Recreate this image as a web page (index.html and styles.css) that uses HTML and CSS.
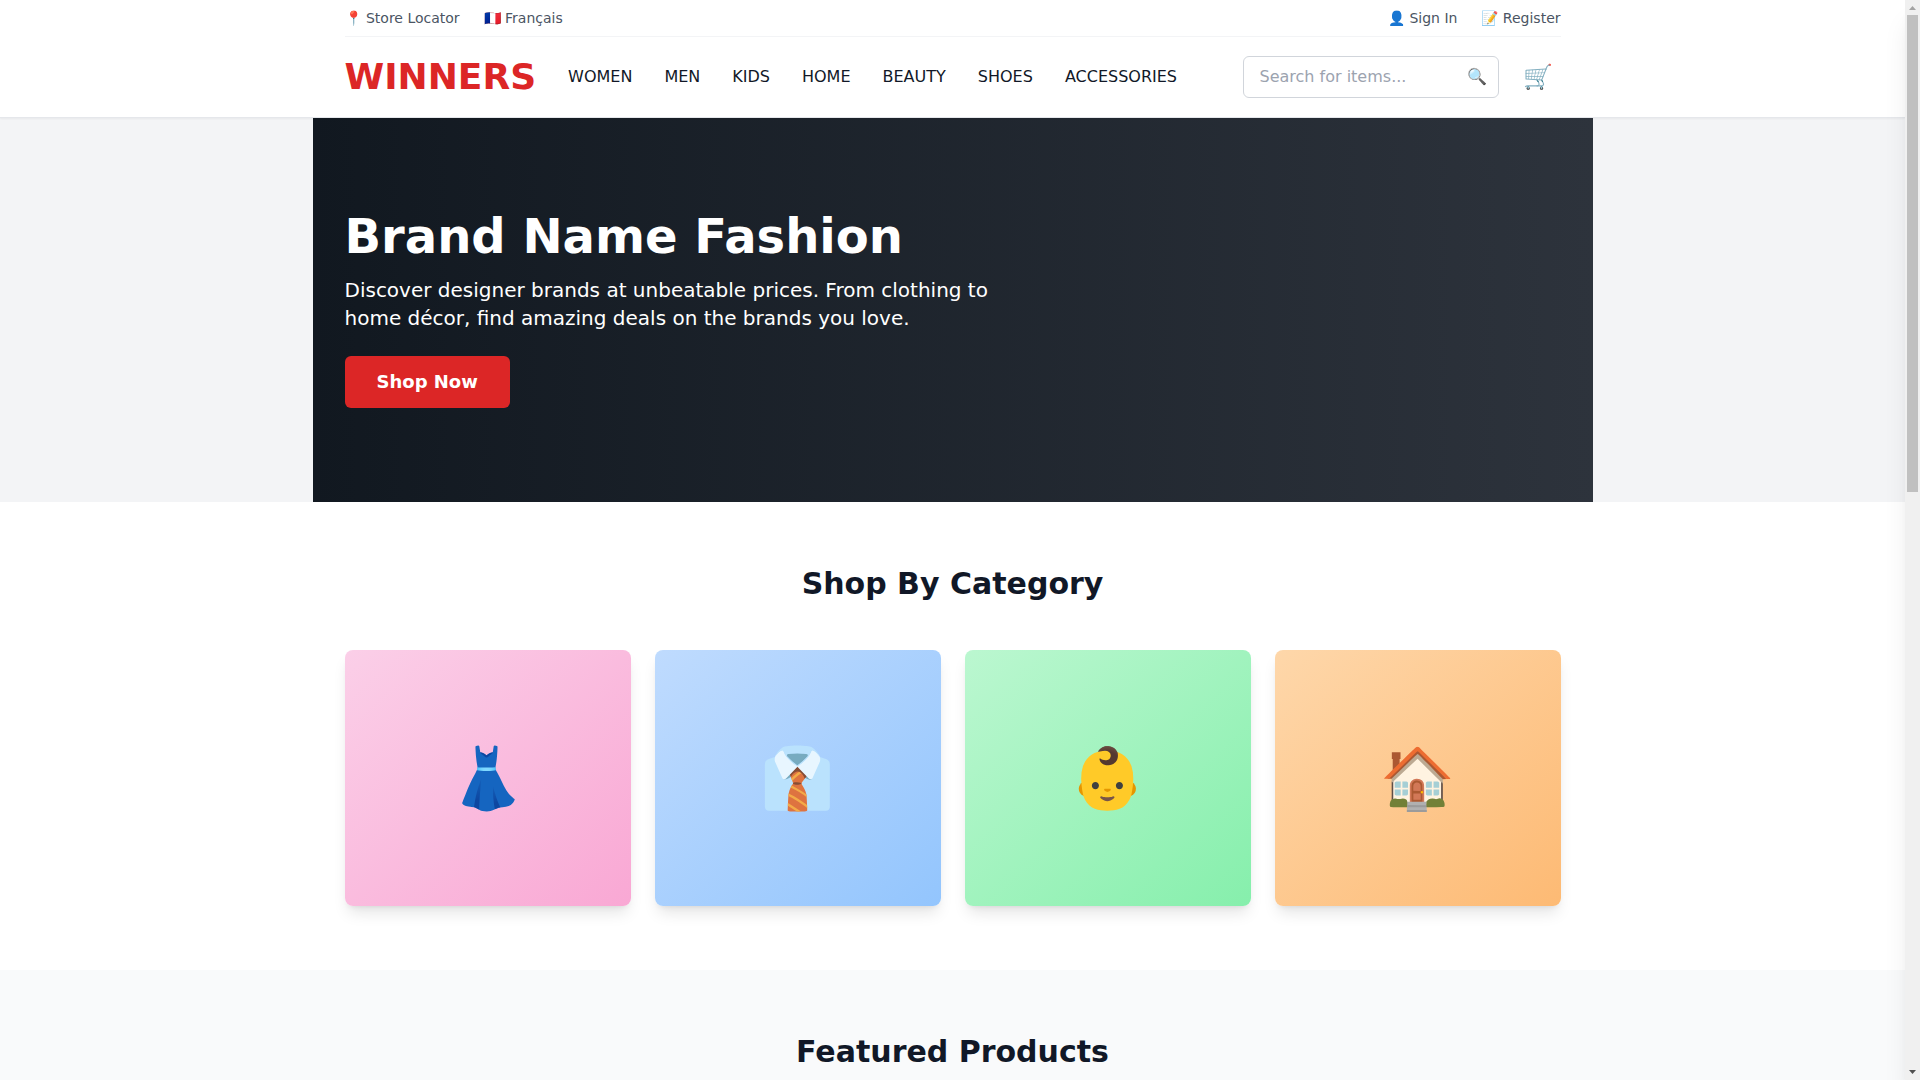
FILE: index.html
```html
<!DOCTYPE html>
<html lang="en">
  <head>
    <meta charset="utf-8">
    <title>Winners</title>
    <link rel="stylesheet" href="styles.css">
  </head>
  <body>
    <div class="view">
      <div class="page">
        <header class="header">
          <div class="container">
            <div class="top-bar">
              <div class="top-links">
                <a href="#">📍 Store Locator</a>
                <a href="#">🇫🇷 Français</a>
              </div>
              <div class="top-links">
                <a href="#">👤 Sign In</a>
                <a href="#">📝 Register</a>
              </div>
            </div>
            <div class="main-bar">
              <a class="logo" href="#">WINNERS</a>
              <nav class="nav">
                <a href="#">WOMEN</a>
                <a href="#">MEN</a>
                <a href="#">KIDS</a>
                <a href="#">HOME</a>
                <a href="#">BEAUTY</a>
                <a href="#">SHOES</a>
                <a href="#">ACCESSORIES</a>
              </nav>
              <form class="search">
                <input type="text" placeholder="Search for items..." aria-label="Search for items">
                <button type="button" aria-label="Search">🔍</button>
              </form>
              <button class="cart-button" type="button" aria-label="Cart">🛒</button>
            </div>
          </div>
        </header>

        <main>
          <section class="hero">
            <div class="hero-inner">
              <div class="hero-text">
                <h1>Brand Name Fashion</h1>
                <p>Discover designer brands at unbeatable prices. From clothing to home décor, find amazing deals on the brands you love.</p>
                <button class="shop-button" type="button">Shop Now</button>
              </div>
            </div>
          </section>

          <section class="categories">
            <div class="container">
              <h2>Shop By Category</h2>
              <div class="category-grid">
                <a class="category pink" href="#">👗</a>
                <a class="category blue" href="#">👔</a>
                <a class="category green" href="#">👶</a>
                <a class="category orange" href="#">🏠</a>
              </div>
            </div>
          </section>

          <section class="featured">
            <div class="container">
              <h2>Featured Products</h2>
            </div>
          </section>
        </main>
      </div>

      <!-- closed cart drawer, waits off the right edge -->
      <aside class="cart-drawer"></aside>
    </div>

    <div class="scrollbar" aria-hidden="true">
      <svg width="15" height="15" viewBox="0 0 15 15"><path d="M4 10h7L7.500 6z" fill="#a3a3a3"/></svg>
      <div class="track">
        <div class="thumb"></div>
      </div>
      <svg width="15" height="15" viewBox="0 0 15 15"><path d="M4 5h7L7.500 9z" fill="#505050"/></svg>
    </div>
  </body>
</html>
```

FILE: styles.css
```css
* {
  box-sizing: border-box;
}
body {
  display: flex;
  height: 100vh;
  margin: 0;
  overflow: hidden;
  font-family: "DejaVu Sans", sans-serif;
  font-size: 16px;
  line-height: 24px;
  color: #111827;
  background-color: #fff;
}
h1, h2, p {
  margin: 0;
}
a {
  color: inherit;
  text-decoration: none;
}
button {
  font-family: inherit;
  border: none;
  background-color: transparent;
  cursor: pointer;
}

/* Scrolling view */
.view {
  position: relative;
  flex: 1;
  min-width: 0;
  overflow: hidden;
}
.page {
  height: 100%;
  overflow-y: auto;
  scrollbar-width: none;
}
.scrollbar {
  display: flex;
  flex-direction: column;
  width: 15px;
  background-color: #f0f0f0;
}
.track {
  flex: 1;
  padding: 0 2px;
}
.thumb {
  height: 45.4%;
  background-color: #c0c0c0;
}
.container {
  max-width: 1280px;
  margin: 0 auto;
  padding: 0 32px;
}

/* Header */
.header {
  position: relative;
  background-color: #fff;
  border-bottom: 1px solid #e5e7eb;
  box-shadow: 0 1px 2px rgba(0, 0, 0, 0.05);
}
.top-bar {
  display: flex;
  justify-content: space-between;
  padding: 8px 0;
  border-bottom: 1px solid #f3f4f6;
  font-size: 14px;
  line-height: 20px;
  color: #4b5563;
}
.top-links {
  display: flex;
  gap: 24px;
}
.main-bar {
  display: flex;
  align-items: center;
  height: 80px;
}
.logo {
  font-size: 36px;
  line-height: 40px;
  font-weight: bold;
  color: #dc2626;
}
.nav {
  display: flex;
  gap: 32px;
  margin-left: 32px;
}
.search {
  position: relative;
  width: 256px;
  margin-left: auto;
}
.search input {
  display: block;
  width: 100%;
  padding: 8px 40px 8px 16px;
  border: 1px solid #d1d5db;
  border-radius: 6px;
  font-family: inherit;
  font-size: 16px;
  line-height: 24px;
}
.search input::placeholder {
  color: #9ca3af;
}
.search button {
  position: absolute;
  right: 12px;
  top: 9px;
  padding: 0;
  font-size: 16px;
  line-height: 24px;
}
.cart-button {
  margin-left: 16px;
  padding: 8px;
  font-size: 24px;
  line-height: 32px;
}

/* Hero */
.hero {
  background-color: #f3f4f6;
}
.hero-inner {
  display: flex;
  align-items: center;
  max-width: 1280px;
  height: 384px;
  margin: 0 auto;
  padding: 0 32px;
  background: linear-gradient(to right, #111820, #2d333c);
  color: #fff;
}
.hero-text {
  max-width: 672px;
}
.hero-text h1 {
  margin-bottom: 16px;
  font-size: 48px;
  line-height: 48px;
}
.hero-text p {
  margin-bottom: 24px;
  font-size: 20px;
  line-height: 28px;
}
.shop-button {
  padding: 12px 32px;
  border-radius: 6px;
  background-color: #dc2626;
  font-size: 18px;
  line-height: 28px;
  font-weight: bold;
  color: #fff;
}
.shop-button:hover {
  background-color: #b91c1c;
}

/* Sections */
.categories,
.featured {
  padding: 64px 0;
}
.featured {
  background-color: #f9fafb;
}
h2 {
  margin-bottom: 48px;
  font-size: 30px;
  line-height: 36px;
  text-align: center;
}
.category-grid {
  display: grid;
  grid-template-columns: repeat(4, 1fr);
  gap: 24px;
}
.category {
  display: flex;
  align-items: center;
  justify-content: center;
  height: 256px;
  border-radius: 8px;
  box-shadow: 0 10px 15px -3px rgba(0, 0, 0, 0.1), 0 4px 6px -4px rgba(0, 0, 0, 0.1);
  font-size: 60px;
  line-height: 60px;
}
.pink {
  background: linear-gradient(to bottom right, #fbcfe8, #f9a8d4);
}
.blue {
  background: linear-gradient(to bottom right, #bfdbfe, #93c5fd);
}
.green {
  background: linear-gradient(to bottom right, #bbf7d0, #86efac);
}
.orange {
  background: linear-gradient(to bottom right, #fed7aa, #fdba74);
}

/* Cart drawer */
.cart-drawer {
  position: absolute;
  top: 0;
  left: 100%;
  width: 384px;
  height: 100%;
  background-color: #fff;
  box-shadow: 0 20px 25px -5px rgba(0, 0, 0, 0.1), 0 8px 10px -6px rgba(0, 0, 0, 0.1);
}
```
